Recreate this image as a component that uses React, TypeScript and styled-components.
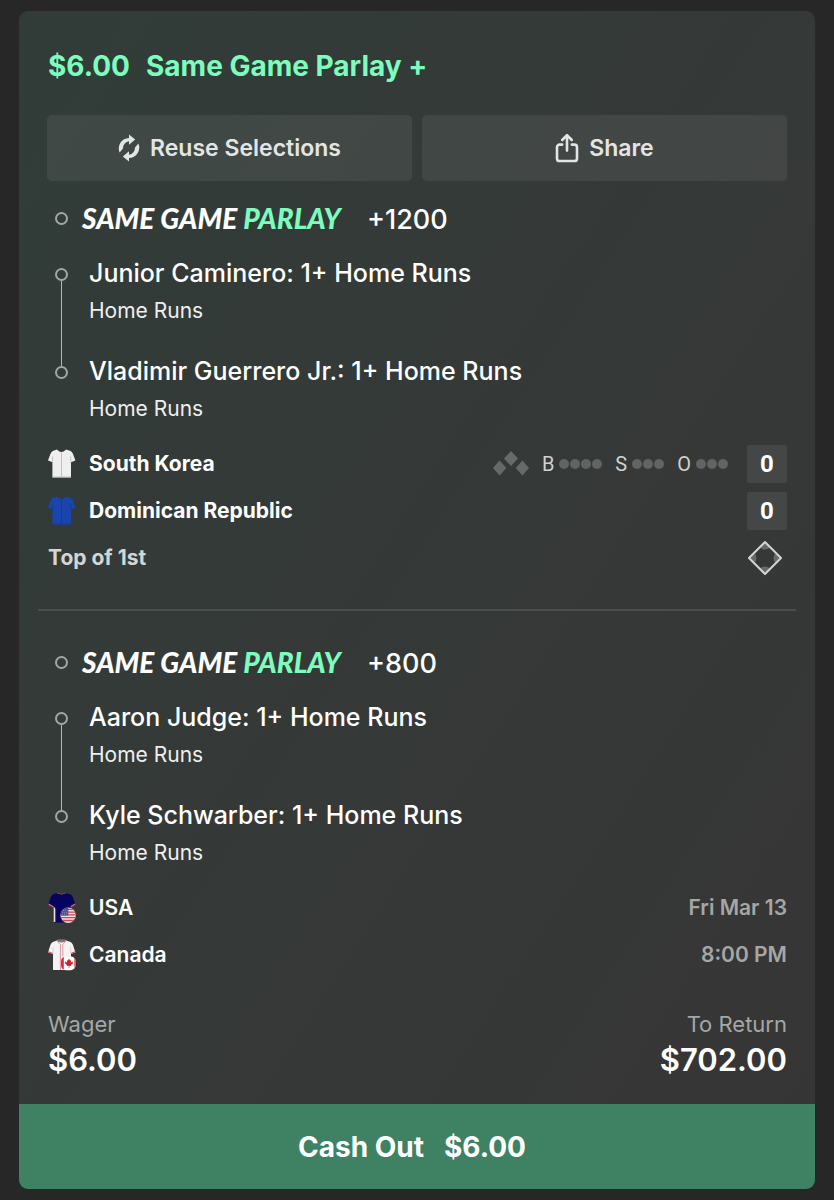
import React from "react";
import styled, { createGlobalStyle } from "styled-components";

const GlobalStyle = createGlobalStyle`
  *, *::before, *::after { box-sizing: border-box; }
  body {
    margin: 0;
    background: #272727;
    color: #fff;
    font-family: Inter, "Liberation Sans", sans-serif;
  }
  h2, h3, p, ul { margin: 0; padding: 0; }
  ul { list-style: none; }
  svg { display: block; flex: none; }
`;

const Page = styled.main`
  padding: 11px 19px;
`;

const Card = styled.article`
  display: flex;
  flex-direction: column;
  overflow: hidden;
  border-radius: 9px;
  background: linear-gradient(123deg, #313c38 0%, #353937 55%, #363535 100%);
`;

const Header = styled.h2`
  display: flex;
  gap: 16px;
  padding: 37px 29px 31px;
  font-size: 28px;
  line-height: 36px;
  font-weight: 700;
  color: #7dfdbd;
`;

const Actions = styled.div`
  display: grid;
  grid-template-columns: 1fr 1fr;
  gap: 10px;
  padding: 0 28px;
`;

const ActionButton = styled.button`
  display: flex;
  align-items: center;
  justify-content: center;
  gap: 10px;
  height: 66px;
  border: 0;
  border-radius: 5px;
  background: rgba(255, 255, 255, 0.07);
  color: #e3e5e4;
  font: 600 23px/30px Inter, sans-serif;
`;

const Group = styled.section<{ $first?: boolean }>`
  padding: ${(p) => (p.$first ? 17 : 31)}px 28px 0;
`;

const GroupHeader = styled.header`
  display: flex;
  align-items: center;
  height: 40px;
  margin-bottom: 19px;
  padding-left: 8px;
`;

const Circle = styled.span`
  flex: none;
  width: 13px;
  height: 13px;
  border: 2px solid #a3a6a5;
  border-radius: 50%;
`;

const Logo = styled.h3`
  margin-left: 14px;
  width: 285px;
  font: italic 900 28px/36px Lato, sans-serif;
  white-space: nowrap;

  em {
    color: #7dfdbd;
  }
`;

const Odds = styled.span`
  padding-top: 3px;
  font-size: 27px;
  line-height: 36px;
  font-weight: 500;
`;

const Leg = styled.li`
  display: flex;
  height: 98px;

  &:last-child {
    height: 85px;
  }
`;

const Rail = styled.span`
  display: flex;
  flex-direction: column;
  align-items: center;
  width: 29px;
  margin-right: 13px;
`;

const Segment = styled.span<{ $top?: boolean; $hidden?: boolean }>`
  flex: ${(p) => (p.$top ? "0 0 11px" : "1")};
  width: 1px;
  background: ${(p) => (p.$hidden ? "transparent" : "#b4b7b6")};
`;

const LegText = styled.div`
  flex: 1;
`;

const LegTitle = styled.p`
  margin-bottom: 9px;
  font-size: 25px;
  line-height: 32px;
  font-weight: 500;
`;

const LegMarket = styled.p`
  font-size: 21px;
  line-height: 26px;
  color: #eef0ef;
`;

const Row = styled.div`
  display: flex;
  align-items: center;
  height: 47px;
`;

const ShirtSlot = styled.span`
  width: 42px;
  padding-left: 1px;
`;

const Team = styled.span<{ $live?: boolean }>`
  flex: 1;
  font-size: 21px;
  line-height: 28px;
  font-weight: ${(p) => (p.$live ? 700 : 600)};
`;

const Period = styled(Team)`
  padding-left: 1px;
  color: #d3d6d4;
`;

const Kickoff = styled.time`
  font-size: 21px;
  line-height: 28px;
  font-weight: 600;
  color: #a5a7a6;
`;

const Count = styled.span`
  display: flex;
  align-items: center;
  gap: 1px;
  margin-left: 13px;
  font: 400 20px/24px Roboto, sans-serif;
  color: #cfd2d0;
`;

const CountLabel = styled.span`
  margin-right: 4px;
`;

const Dot = styled.span`
  width: 10px;
  height: 10px;
  border-radius: 50%;
  background: #616463;
`;

const Score = styled.span`
  width: 40px;
  height: 38px;
  margin-left: 19px;
  border-radius: 2px;
  background: #454746;
  font: 700 24px/38px Roboto, sans-serif;
  text-align: center;
`;

const FieldSlot = styled.span`
  padding-right: 4px;
`;

const Divider = styled.hr`
  width: auto;
  height: 2px;
  margin: 28px 19px 0;
  border: 0;
  background: #4b4e4d;
`;

const Totals = styled.footer`
  display: flex;
  justify-content: space-between;
  padding: 32px 28px 22px 29px;
`;

const Total = styled.p<{ $right?: boolean }>`
  display: flex;
  flex-direction: column;
  text-align: ${(p) => (p.$right ? "right" : "left")};
`;

const TotalLabel = styled.span`
  font-size: 22px;
  line-height: 28px;
  color: #a5a7a6;
`;

const TotalValue = styled.strong`
  font-size: 31px;
  line-height: 44px;
  font-weight: 600;
`;

const CashOut = styled.button`
  display: flex;
  align-items: center;
  justify-content: center;
  gap: 20px;
  height: 85px;
  padding: 0 10px 0 0;
  border: 0;
  background: #3e8263;
  color: #fff;
  font: 700 28px/36px Inter, sans-serif;
`;

const ReuseIcon = () => (
  <svg width="22" height="28" viewBox="0 0 22 28" aria-hidden="true">
    <g fill="currentColor">
      <path d="M11 .4 17.2 5.6 11 10.8V7.3A7 7 0 0 0 5 14.6L1.6 18.6A10.6 10.6 0 0 1 11 3.9Z" />
      <path
        transform="rotate(180 11 14)"
        d="M11 .4 17.2 5.6 11 10.8V7.3A7 7 0 0 0 5 14.6L1.6 18.6A10.6 10.6 0 0 1 11 3.9Z"
      />
    </g>
  </svg>
);

const ShareIcon = () => (
  <svg width="24" height="30" viewBox="0 0 24 30" aria-hidden="true">
    <g fill="none" stroke="currentColor" strokeWidth="2.6" strokeLinecap="round" strokeLinejoin="round">
      <path d="M7.2 11.6H4.6A2.6 2.6 0 0 0 2 14.2V25.4A2.6 2.6 0 0 0 4.6 28H19.4A2.6 2.6 0 0 0 22 25.4V14.2A2.6 2.6 0 0 0 19.4 11.6H16.8" />
      <path d="M12 17.6V2.2M7.2 7 12 2.2 16.8 7" />
    </g>
  </svg>
);

const shirtPath =
  "M9 .4Q13.5 5.4 18 .4L22.6 2Q24.2 2.8 25 5L27.4 11.4 23 13.2V28.4H4.4V13.2L0 11.4 2.4 5Q3.2 2.8 4.8 2Z";

const PlainShirt = ({ fill, shade }: { fill: string; shade: string }) => (
  <svg width="28" height="30" viewBox="0 0 28 30" aria-hidden="true">
    <path d={shirtPath} fill={fill} />
    <path d="M13.5 3.4V28.4M4.6 7.5V13.6M22.8 7.5V13.6M4.4 28H23" stroke={shade} strokeWidth=".8" fill="none" />
  </svg>
);

const UsaShirt = () => (
  <svg width="28" height="32" viewBox="0 0 28 32" aria-hidden="true">
    <defs>
      <clipPath id="usa-roundel">
        <circle cx="20.1" cy="23.2" r="7.7" />
      </clipPath>
    </defs>
    <path d="M9 1Q13.5 3.4 18 1L22.6 2.6Q24.2 3.4 25 5.6L27.4 12.4 22.6 15V30.4H6V15L.4 12.4 2.6 5.6Q3.4 3.4 5 2.6Z" fill="#07045f" />
    <path d="M9 1Q13.5 3.4 18 1" fill="none" stroke="#9c3340" strokeWidth="1" />
    <path d="M.6 12.2 5.4 14.8M27.2 12.2 22.8 14.6" stroke="#d4626c" strokeWidth="1.4" />
    <path d="M6.4 15.4V30" stroke="#e6dfe3" strokeWidth="1.4" />
    <path d="M7.6 17V30" stroke="#d23f4d" strokeWidth=".8" />
    <g clipPath="url(#usa-roundel)">
      <path d="M12 15H28V31H12Z" fill="#f0dfe1" />
      <path d="M12 17.3H28M12 20.1H28M12 22.9H28M12 25.7H28M12 28.5H28" stroke="#c9485a" strokeWidth="1.3" />
      <path d="M12 15H20.3V23.4H12Z" fill="#4a4a84" />
      <path d="M15 18.2H19.6M14.4 20.2H19.6M14 22H19.6" stroke="#b9b6cf" strokeWidth=".7" strokeDasharray="1 1" />
    </g>
  </svg>
);

const CanadaShirt = () => (
  <svg width="28" height="32" viewBox="0 0 28 32" aria-hidden="true">
    <defs>
      <clipPath id="canada-roundel">
        <rect x="13" y="17.4" width="14.6" height="13.8" rx="5" />
      </clipPath>
    </defs>
    <path d="M9 1.4H18L22.6 3Q24.2 3.8 25 6L27.4 13.4 23 15V31H5V15L0 13.4 2.4 6Q3.2 3.8 4.8 3Z" fill="#f5f2f3" />
    <path d="M9 .6Q13.5-.2 18 .6L17 2.8Q13.5 4.4 10 2.8Z" fill="#77797b" />
    <path d="M9 1.4Q10.8 4.6 12.4 5.4V30.8M18 1.4Q16.2 4.6 14.8 5.4V17" fill="none" stroke="#d9808a" strokeWidth=".8" />
    <path d="M.2 12.8 4.8 14.6M27.2 12.8 23 14.4" stroke="#cf4754" strokeWidth="1.1" />
    <path d="M5 8V15M22.8 8V15" stroke="#d8bfc3" strokeWidth=".7" />
    <g clipPath="url(#canada-roundel)">
      <path d="M13 17H28V32H13Z" fill="#fff" />
      <path d="M13 17H15.8V32H13ZM26.4 17H28V32H26.4Z" fill="#d5303c" />
    </g>
    <path d="M21 19.6 22.1 21.6 23.2 21.2 22.9 23.4 24.7 22.4 24.6 23.6 25.4 24 23 26.1 23.2 27 21.3 26.8V29H20.7V26.8L18.8 27 19 26.1 16.6 24 17.4 23.6 17.3 22.4 19.1 23.4 18.8 21.2 19.9 21.6Z" fill="#cf1f2d" />
  </svg>
);

const BasesIcon = () => (
  <svg width="36" height="26" viewBox="0 0 36 26" role="img" aria-label="Bases empty">
    <path d="M18 0 25 7.5 18 15 11 7.5ZM6.6 9.6 13.3 17.1 6.6 24.6 0 17.1ZM29.4 9.6 36 17.1 29.4 24.6 22.8 17.1Z" fill="#686a69" />
  </svg>
);

const FieldIcon = () => (
  <svg width="36" height="36" viewBox="0 0 36 36" role="img" aria-label="Field">
    <defs>
      <clipPath id="infield">
        <path d="M18 1.6 34.4 18 18 34.4 1.6 18Z" />
      </clipPath>
    </defs>
    <g clipPath="url(#infield)" fill="#666967">
      <circle cx="18" cy="2" r="7.5" />
      <circle cx="34" cy="18" r="7.5" />
      <circle cx="18" cy="34" r="7.5" />
      <circle cx="2" cy="18" r="7.5" />
    </g>
    <path d="M18 2 34 18 18 34 2 18Z" fill="none" stroke="#d0d3d1" strokeWidth="2" strokeLinejoin="round" />
  </svg>
);

const Counter = ({ label, total }: { label: string; total: number }) => (
  <Count>
    <CountLabel>{label}</CountLabel>
    {Array.from({ length: total }, (_, i) => (
      <Dot key={i} />
    ))}
  </Count>
);

const ParlayHeader = ({ odds }: { odds: string }) => (
  <GroupHeader>
    <Circle />
    <Logo>
      SAME GAME <em>PARLAY</em>
    </Logo>
    <Odds>{odds}</Odds>
  </GroupHeader>
);

const Legs = ({ players }: { players: string[] }) => (
  <ul>
    {players.map((player, i) => (
      <Leg key={player}>
        <Rail>
          <Segment $top $hidden={i === 0} />
          <Circle />
          <Segment $hidden={i === players.length - 1} />
        </Rail>
        <LegText>
          <LegTitle>{player}: 1+ Home Runs</LegTitle>
          <LegMarket>Home Runs</LegMarket>
        </LegText>
      </Leg>
    ))}
  </ul>
);

export default function App() {
  return (
    <>
      <GlobalStyle />
      <Page>
        <Card>
          <Header>
            <span>$6.00</span>
            <span>Same Game Parlay +</span>
          </Header>
          <Actions>
            <ActionButton type="button">
              <ReuseIcon />
              Reuse Selections
            </ActionButton>
            <ActionButton type="button">
              <ShareIcon />
              Share
            </ActionButton>
          </Actions>

          <Group $first>
            <ParlayHeader odds="+1200" />
            <Legs players={["Junior Caminero", "Vladimir Guerrero Jr."]} />
            <Row>
              <ShirtSlot>
                <PlainShirt fill="#efefef" shade="#b4b6b5" />
              </ShirtSlot>
              <Team $live>South Korea</Team>
              <BasesIcon />
              <Counter label="B" total={4} />
              <Counter label="S" total={3} />
              <Counter label="O" total={3} />
              <Score>0</Score>
            </Row>
            <Row>
              <ShirtSlot>
                <PlainShirt fill="#1a45ad" shade="#16398f" />
              </ShirtSlot>
              <Team $live>Dominican Republic</Team>
              <Score>0</Score>
            </Row>
            <Row>
              <Period $live>Top of 1st</Period>
              <FieldSlot>
                <FieldIcon />
              </FieldSlot>
            </Row>
          </Group>

          <Divider />

          <Group>
            <ParlayHeader odds="+800" />
            <Legs players={["Aaron Judge", "Kyle Schwarber"]} />
            <Row>
              <ShirtSlot>
                <UsaShirt />
              </ShirtSlot>
              <Team>USA</Team>
              <Kickoff>Fri Mar 13</Kickoff>
            </Row>
            <Row>
              <ShirtSlot>
                <CanadaShirt />
              </ShirtSlot>
              <Team>Canada</Team>
              <Kickoff>8:00 PM</Kickoff>
            </Row>
          </Group>

          <Totals>
            <Total>
              <TotalLabel>Wager</TotalLabel>
              <TotalValue>$6.00</TotalValue>
            </Total>
            <Total $right>
              <TotalLabel>To Return</TotalLabel>
              <TotalValue>$702.00</TotalValue>
            </Total>
          </Totals>

          <CashOut type="button">
            <span>Cash Out</span>
            <span>$6.00</span>
          </CashOut>
        </Card>
      </Page>
    </>
  );
}
